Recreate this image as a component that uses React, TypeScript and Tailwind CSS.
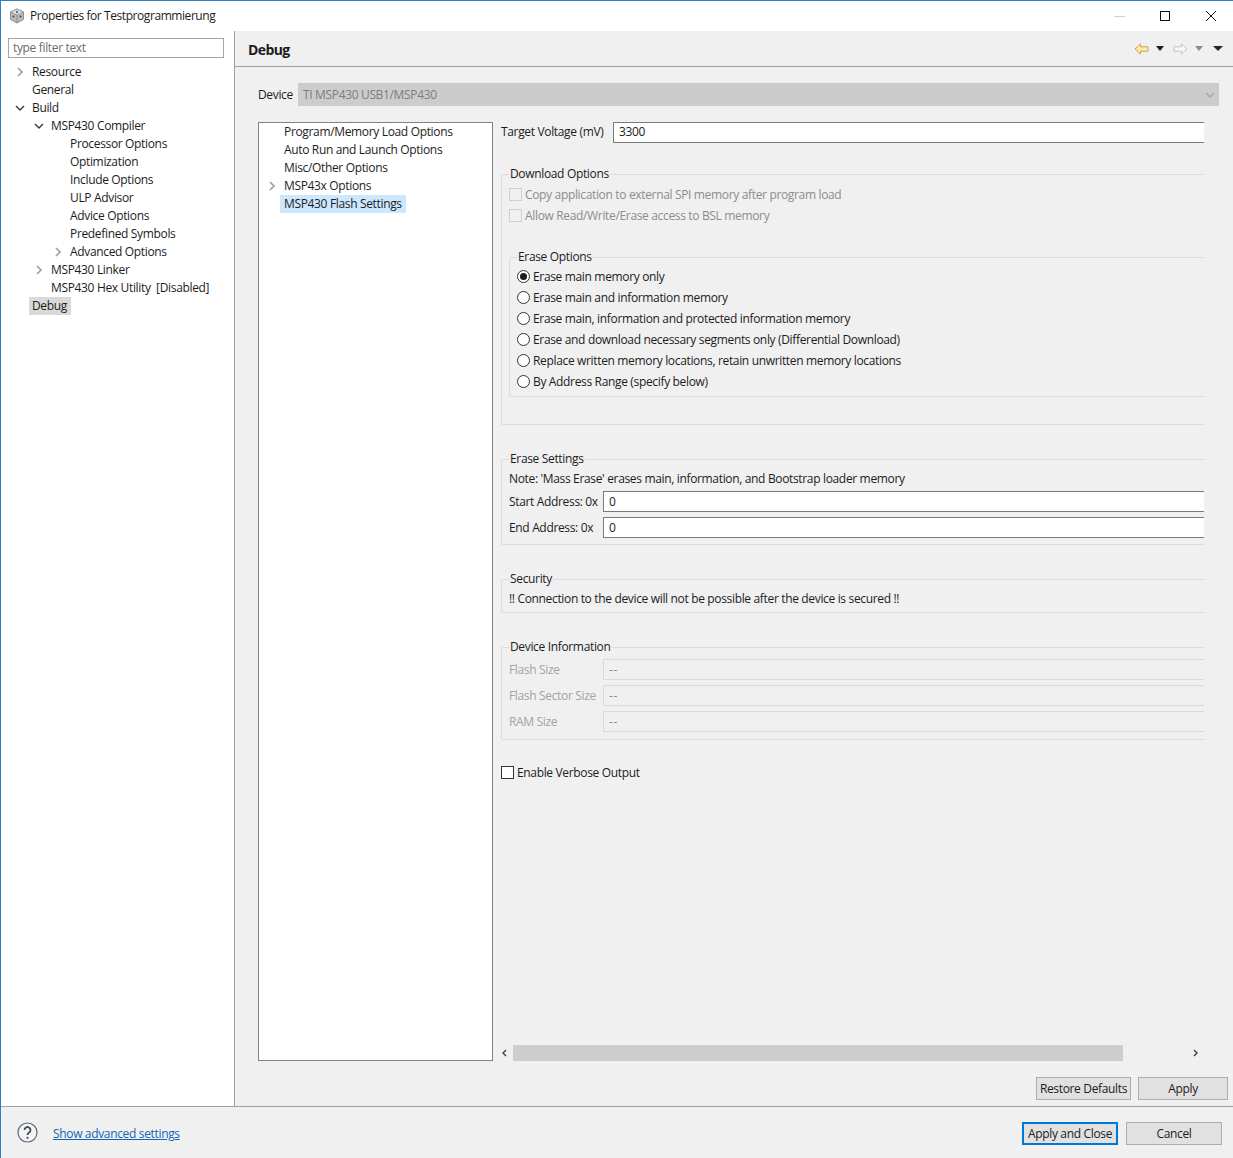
import type { ReactNode } from "react";

const font = "font-['Open_Sans','Noto_Sans',sans-serif] text-[12px] tracking-[-0.34px] leading-[18px] text-[#1c1c1c]";

const tree = [
  { label: "Resource", level: 0, arrow: "right" },
  { label: "General", level: 0 },
  { label: "Build", level: 0, arrow: "down" },
  { label: "MSP430 Compiler", level: 1, arrow: "down" },
  { label: "Processor Options", level: 2 },
  { label: "Optimization", level: 2 },
  { label: "Include Options", level: 2 },
  { label: "ULP Advisor", level: 2 },
  { label: "Advice Options", level: 2 },
  { label: "Predefined Symbols", level: 2 },
  { label: "Advanced Options", level: 2, arrow: "right" },
  { label: "MSP430 Linker", level: 1, arrow: "right" },
  { label: "MSP430 Hex Utility  [Disabled]", level: 1 },
  { label: "Debug", level: 0, selected: true },
];

const eraseOptions = [
  "Erase main memory only",
  "Erase main and information memory",
  "Erase main, information and protected information memory",
  "Erase and download necessary segments only (Differential Download)",
  "Replace written memory locations, retain unwritten memory locations",
  "By Address Range (specify below)",
];

function Arrow({ dir }: { dir?: string }) {
  if (dir === "down") {
    return (
      <svg width="10" height="10" viewBox="0 0 10 10" fill="none" stroke="#404040" strokeWidth="1.5">
        <path d="M1 3l4 4 4-4" />
      </svg>
    );
  }
  if (dir === "right") {
    return (
      <svg width="10" height="10" viewBox="0 0 10 10" fill="none" stroke="#a0a0a0" strokeWidth="1.7">
        <path d="M3 1l4 4-4 4" />
      </svg>
    );
  }
  return null;
}

function Group({ title, className, indent, children }: { title: string; className: string; indent?: string; children: ReactNode }) {
  return (
    <fieldset className={`rounded-[2px] border border-[#dcdcdc] ${className}`}>
      <legend className={`px-[1px] ${indent ?? "ml-[7px]"}`}>{title}</legend>
      {children}
    </fieldset>
  );
}

function Field({ label, value, disabled }: { label: string; value: string; disabled?: boolean }) {
  return (
    <div className="flex h-[26px] items-center">
      <span className={`w-[101px] shrink-0 pl-[7px] pt-[1px] ${disabled ? "text-[#a3a3a3]" : ""}`}>{label}</span>
      <div className={`h-[21px] flex-1 border px-[5px] leading-[19px] ${disabled ? "border-[#d9d9d9] tracking-[0.6px] text-[#8c8c8c]" : "border-[#7a7a7a] bg-white"}`}>
        {value}
      </div>
    </div>
  );
}

function Check({ label, disabled }: { label: string; disabled?: boolean }) {
  return (
    <div className={`flex h-[21px] items-center gap-[3px] ${disabled ? "text-[#8c8c8c]" : ""}`}>
      <span className={`h-[13px] w-[13px] border ${disabled ? "border-[#cfcfcf] bg-[#f0f0f0]" : "border-[#333333] bg-white"}`} />
      <span>{label}</span>
    </div>
  );
}

function Radio({ label, checked }: { label: string; checked?: boolean }) {
  return (
    <div className="flex h-[21px] items-center gap-[3px]">
      <span className="flex h-[13px] w-[13px] items-center justify-center rounded-full border border-[#333333] bg-white">
        {checked && <span className="h-[7px] w-[7px] rounded-full bg-[#1c1c1c]" />}
      </span>
      <span>{label}</span>
    </div>
  );
}

function Button({ label, className }: { label: string; className: string }) {
  return (
    <button className={`flex h-[23px] items-center justify-center border border-[#adadad] bg-[#e1e1e1] ${className}`}>{label}</button>
  );
}

function AppIcon() {
  return (
    <svg width="16" height="16" viewBox="0 0 16 16">
      <path d="M8 1l6.5 3v7.5L8 15l-6.5-3.5V4z" fill="#b9b9b9" stroke="#7d7d7d" strokeWidth="0.8" />
      <path d="M1.5 4L8 7.2 14.5 4 8 1z" fill="#dedede" stroke="#7d7d7d" strokeWidth="0.6" />
      <path d="M8 7.2V15" stroke="#7d7d7d" strokeWidth="0.8" />
      <circle cx="8" cy="4" r="1" fill="#444444" />
      <circle cx="4.5" cy="8.5" r="1" fill="#444444" />
      <circle cx="11.5" cy="8.5" r="1" fill="#444444" />
    </svg>
  );
}

function NavArrow({ forward }: { forward?: boolean }) {
  return (
    <svg width="15" height="12" viewBox="0 0 15 12" className={forward ? "-scale-x-100" : ""}>
      <path
        d="M1 6L6.5 1v2.8h7.5v4.4H6.5V11z"
        fill={forward ? "#f7f7f7" : "#fde9a8"}
        stroke={forward ? "#c4c4c4" : "#d0a44a"}
        strokeWidth="1"
      />
    </svg>
  );
}

function Caret({ color, wide }: { color: string; wide?: boolean }) {
  return (
    <svg width={wide ? 10 : 8} height="5" viewBox={wide ? "0 0 10 5" : "0 0 8 5"}>
      <path d={wide ? "M0 0h10L5 5z" : "M0 0h8L4 5z"} fill={color} />
    </svg>
  );
}

export default function App() {
  return (
    <div className={`flex h-[1158px] w-[1233px] flex-col overflow-hidden border-l border-t border-[#2f7fc1] bg-white ${font}`}>
      <div className="flex h-[30px] shrink-0 items-center pl-[8px]">
        <AppIcon />
        <span className="ml-[5px] flex-1 tracking-[-0.43px]">Properties for Testprogrammierung</span>
        <div className="mr-[35px] h-px w-[11px] bg-[#d0d0d0]" />
        <div className="mr-[35px] h-[10px] w-[10px] border border-[#111111]" />
        <svg width="12" height="12" viewBox="0 0 12 12" stroke="#111111" strokeWidth="1" className="mr-[16px]">
          <path d="M1 1l10 10M11 1L1 11" />
        </svg>
      </div>

      <div className="flex min-h-0 flex-1">
        <div className="w-[234px] shrink-0 border-r border-[#a0a0a0] pl-[7px] pr-[10px] pt-[7px]">
          <div className="h-[20px] border border-[#a6a6a6] px-[4px] leading-[18px] text-[#6d6d6d]">type filter text</div>
          <div className="mt-[5px]">
            {tree.map((item) => (
              <div key={item.label} className="flex h-[18px] items-center">
                <span className={`flex w-[24px] shrink-0 justify-end pr-[7px] ${item.level === 1 ? "ml-[19px]" : item.level === 2 ? "ml-[38px]" : ""}`}>
                  <Arrow dir={item.arrow} />
                </span>
                <span className={`whitespace-pre ${item.selected ? "-ml-[3px] bg-[#d9d9d9] pl-[3px] pr-[4px]" : ""}`}>{item.label}</span>
              </div>
            ))}
          </div>
        </div>

        <div className="flex min-w-0 flex-1 flex-col bg-[#f0f0f0]">
          <div className="flex h-[36px] shrink-0 items-center border-b border-[#a0a0a0] pl-[13px] pr-[10px]">
            <span className="flex-1 pt-[2px] text-[14px] font-bold tracking-[-0.6px]">Debug</span>
            <NavArrow />
            <span className="ml-[7px]"><Caret color="#1c1c1c" /></span>
            <span className="ml-[9px]"><NavArrow forward /></span>
            <span className="ml-[7px]"><Caret color="#8c8c8c" /></span>
            <span className="ml-[10px]"><Caret color="#1f2440" wide /></span>
          </div>

          <div className="flex min-h-0 flex-1 flex-col pl-[23px] pr-[5px]">
            <div className="mt-[16px] flex h-[23px] shrink-0 items-center pr-[9px]">
              <span className="w-[40px] shrink-0">Device</span>
              <div className="flex h-[23px] flex-1 items-center justify-between bg-[#cccccc] pl-[5px] pr-[3px] text-[#7d7d7d]">
                <span>TI MSP430 USB1/MSP430</span>
                <svg width="12" height="12" viewBox="0 0 12 12" fill="none" stroke="#a8a8a8" strokeWidth="1.4">
                  <path d="M2 4l4 4 4-4" />
                </svg>
              </div>
            </div>

            <div className="mt-[16px] flex h-[939px] shrink-0">
              <div className="w-[235px] shrink-0 border border-[#828282] bg-white">
                <div className="flex h-[18px] items-center pl-[25px]">Program/Memory Load Options</div>
                <div className="flex h-[18px] items-center pl-[25px]">Auto Run and Launch Options</div>
                <div className="flex h-[18px] items-center pl-[25px]">Misc/Other Options</div>
                <div className="flex h-[18px] items-center pl-[8px]">
                  <span className="w-[17px]"><Arrow dir="right" /></span>MSP43x Options
                </div>
                <div className="flex h-[18px] items-center pl-[21px]">
                  <span className="bg-[#cce8ff] px-[4px]">MSP430 Flash Settings</span>
                </div>
              </div>

              <div className="flex w-[711px] shrink-0 flex-col pl-[4px]">
                <div className="min-h-0 flex-1 overflow-hidden pl-[4px]">
                  <div className="w-[760px]">
                    <div className="flex h-[21px] items-center">
                      <span className="w-[112px] shrink-0 pb-[1px]">Target Voltage (mV)</span>
                      <div className="h-[21px] flex-1 border border-[#7a7a7a] bg-white px-[5px] leading-[18px]">3300</div>
                    </div>

                    <Group title="Download Options" indent="ml-0" className="mt-[22px] h-[260px] pl-[7px] pt-[1px]">
                      <Check label="Copy application to external SPI memory after program load" disabled />
                      <Check label="Allow Read/Write/Erase access to BSL memory" disabled />
                      <Group title="Erase Options" indent="ml-0" className="mt-[22px] h-[149px] pl-[7px]">
                        {eraseOptions.map((label, i) => (
                          <Radio key={label} label={label} checked={i === 0} />
                        ))}
                      </Group>
                    </Group>

                    <Group title="Erase Settings" className="mt-[25px] h-[95px]">
                      <div className="mt-[2px] h-[18px] pl-[7px]">Note: 'Mass Erase' erases main, information, and Bootstrap loader memory</div>
                      <Field label="Start Address: 0x" value="0" />
                      <Field label="End Address: 0x" value="0" />
                    </Group>

                    <Group title="Security" className="mt-[25px] h-[43px]">
                      <div className="mt-[2px] h-[18px] pl-[7px]">!! Connection to the device will not be possible after the device is secured !!</div>
                    </Group>

                    <Group title="Device Information" className="mt-[25px] h-[102px]">
                      <Field label="Flash Size" value="--" disabled />
                      <Field label="Flash Sector Size" value="--" disabled />
                      <Field label="RAM Size" value="--" disabled />
                    </Group>

                    <div className="mt-[22px]">
                      <Check label="Enable Verbose Output" />
                    </div>
                  </div>
                </div>

                <div className="flex h-[16px] shrink-0 items-center justify-between bg-[#f0f0f0]">
                  <div className="flex h-full flex-1 items-center">
                    <svg width="16" height="10" viewBox="0 0 16 10" fill="none" stroke="#404040" strokeWidth="1.4">
                      <path d="M9 2L6 5l3 3" />
                    </svg>
                    <div className="h-[16px] w-[610px] bg-[#cdcdcd]" />
                  </div>
                  <svg width="16" height="10" viewBox="0 0 16 10" fill="none" stroke="#404040" strokeWidth="1.4">
                    <path d="M6 2l3 3-3 3" />
                  </svg>
                </div>
              </div>
            </div>

            <div className="mt-[16px] flex shrink-0 justify-end gap-[7px]">
              <Button label="Restore Defaults" className="w-[95px]" />
              <Button label="Apply" className="w-[90px]" />
            </div>
          </div>
        </div>
      </div>

      <div className="flex h-[52px] shrink-0 items-start border-t border-[#a0a0a0] bg-[#f0f0f0] pl-[16px] pr-[11px]">
        <svg width="21" height="21" viewBox="0 0 21 21" className="mt-[15px]">
          <circle cx="10.5" cy="10.5" r="9.5" fill="#f4f4f6" stroke="#5f6b7c" strokeWidth="1.2" />
          <path d="M7.5 8a3 3 0 1 1 4.6 2.6c-1 .6-1.6 1.2-1.6 2.4" fill="none" stroke="#3f4a5c" strokeWidth="1.8" />
          <circle cx="10.5" cy="15.8" r="1.1" fill="#3f4a5c" />
        </svg>
        <a className="ml-[15px] mt-[18px] flex-1 text-[#1464b4] underline">Show advanced settings</a>
        <button className="mt-[15px] flex h-[23px] w-[96px] items-center justify-center border-2 border-[#0078d7] bg-[#e1e1e1]">Apply and Close</button>
        <button className="ml-[8px] mt-[15px] flex h-[23px] w-[96px] items-center justify-center border border-[#adadad] bg-[#e1e1e1]">Cancel</button>
      </div>
    </div>
  );
}
